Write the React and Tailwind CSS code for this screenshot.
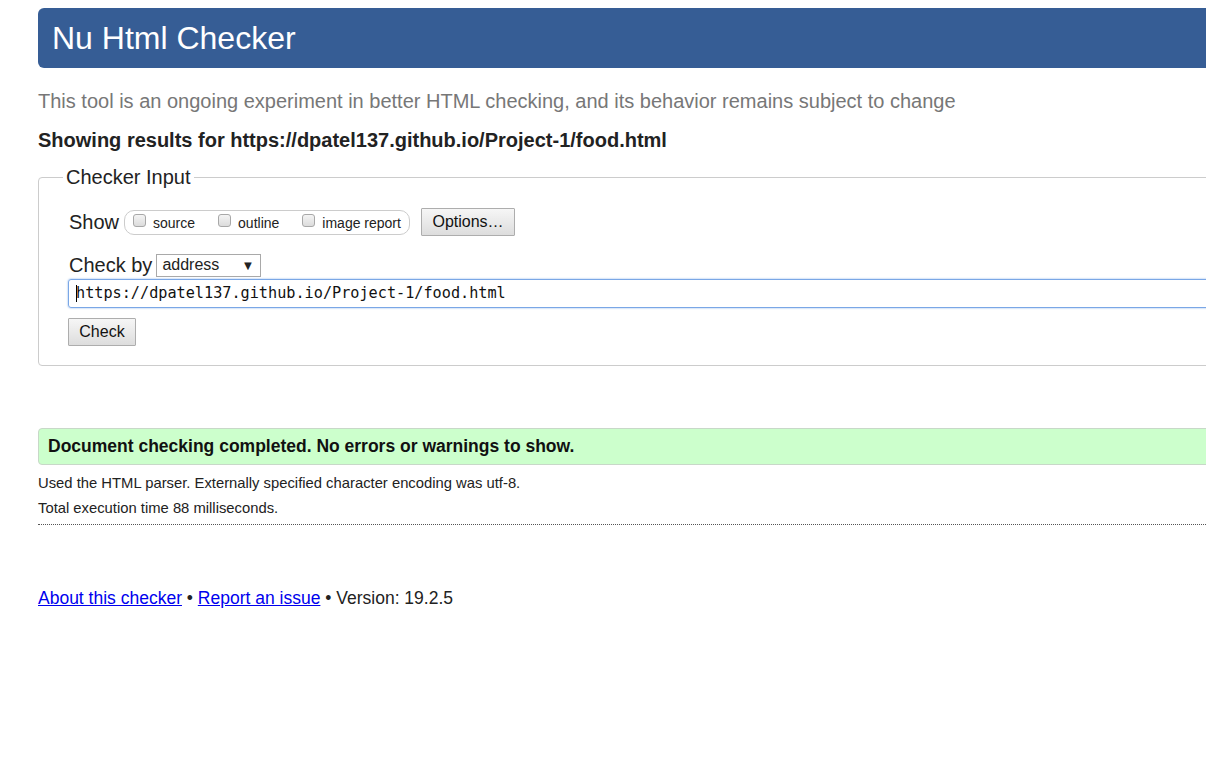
import React from 'react';

const sans = { fontFamily: '"Liberation Sans", Arial, sans-serif' };

const Checkbox = ({ label }) => (
  <label className="flex items-start">
    <span className="mt-[2px] w-[13px] h-[13px] rounded-[3px] border border-[#a8a8a8] bg-gradient-to-b from-[#f4f4f4] to-[#dcdcdc]"></span>
    <span className="ml-[7px] mt-[3px] text-[14px] leading-[16px] text-[#222]">{label}</span>
  </label>
);

const GrayButton = ({ children, className }) => (
  <button
    type="button"
    className={`border border-[#adadad] bg-gradient-to-b from-[#f6f6f6] to-[#dddddd] text-[16px] text-[#111] leading-none rounded-[1px] ${className}`}
  >
    {children}
  </button>
);

export default function App() {
  return (
    <div className="w-screen min-h-screen overflow-hidden bg-white" style={sans}>
      <div className="w-[1240px] ml-[38px] pt-2 text-[#222]">
        {/* Header */}
        <div className="h-[60px] bg-[#365d95] rounded-[6px] flex items-center pl-[14px]">
          <h1 className="text-[32px] text-white leading-none">Nu Html Checker</h1>
        </div>

        <p className="mt-[21px] text-[20px] leading-[24px] text-[#777]">
          This tool is an ongoing experiment in better HTML checking, and its behavior remains subject to change
        </p>
        <p className="mt-[15px] text-[20px] leading-[24px] font-bold text-[#222]">
          Showing results for https://dpatel137.github.io/Project-1/food.html
        </p>

        {/* Checker input */}
        <fieldset className="mt-[13px] border border-[#cccccc] rounded-[4px] pl-[30px] pb-[19px]">
          <legend className="-ml-[6px] px-[3px] text-[20px] leading-[24px] text-[#222]">Checker Input</legend>

          <div className="mt-[19px] flex items-center">
            <span className="text-[20px] leading-[24px]">Show</span>
            <div className="ml-[5px] h-[25px] w-[286px] border border-[#cccccc] rounded-[10px] flex items-start pl-[8px] pt-[1px] gap-[23px]">
              <Checkbox label="source" />
              <Checkbox label="outline" />
              <Checkbox label="image report" />
            </div>
            <GrayButton className="ml-[11px] h-[28px] w-[94px]">Options…</GrayButton>
          </div>

          <div className="mt-[17px] flex items-center">
            <span className="text-[20px] leading-[24px]">Check by</span>
            <div className="ml-[4px] h-[23px] w-[105px] border border-[#a9a9a9] bg-white flex items-center justify-between pl-[5px] pr-[6px]">
              <span className="text-[16px] leading-none">address</span>
              <span className="text-[13px] leading-none">▼</span>
            </div>
          </div>

          <div className="mt-[2px] -ml-[1px] h-[29px] border border-[#7aa7e6] rounded-[3px] shadow-[0_0_2px_#7aa7e6] flex items-center pl-[7px]">
            <span className="w-px h-[17px] bg-black -mr-px"></span>
            <span className="text-[15.2px] leading-none text-[#111]" style={{ fontFamily: '"DejaVu Sans Mono", monospace' }}>
              https://dpatel137.github.io/Project-1/food.html
            </span>
          </div>

          <GrayButton className="mt-[10px] -ml-[1px] h-[28px] w-[68px]">Check</GrayButton>
        </fieldset>

        {/* Result */}
        <div className="mt-[62px] h-[37px] bg-[#ccffcc] border border-[#c8d8c8] rounded-[4px] flex items-center pl-[9px]">
          <span className="text-[17.5px] font-bold text-[#111]">
            Document checking completed. No errors or warnings to show.
          </span>
        </div>

        <p className="mt-[9px] text-[14.8px] leading-[18px] text-[#222]">
          Used the HTML parser. Externally specified character encoding was utf-8.
        </p>
        <p className="mt-[7px] text-[14.8px] leading-[18px] text-[#222]">
          Total execution time 88 milliseconds.
        </p>
        <div className="mt-[7px] border-t border-dotted border-[#555]"></div>

        <p className="mt-[62px] text-[17.5px] leading-[22px] text-[#222]">
          <a href="#" className="text-[#0000ee] underline">About this checker</a>
          {' • '}
          <a href="#" className="text-[#0000ee] underline">Report an issue</a>
          {' • Version: 19.2.5'}
        </p>
      </div>
    </div>
  );
}
